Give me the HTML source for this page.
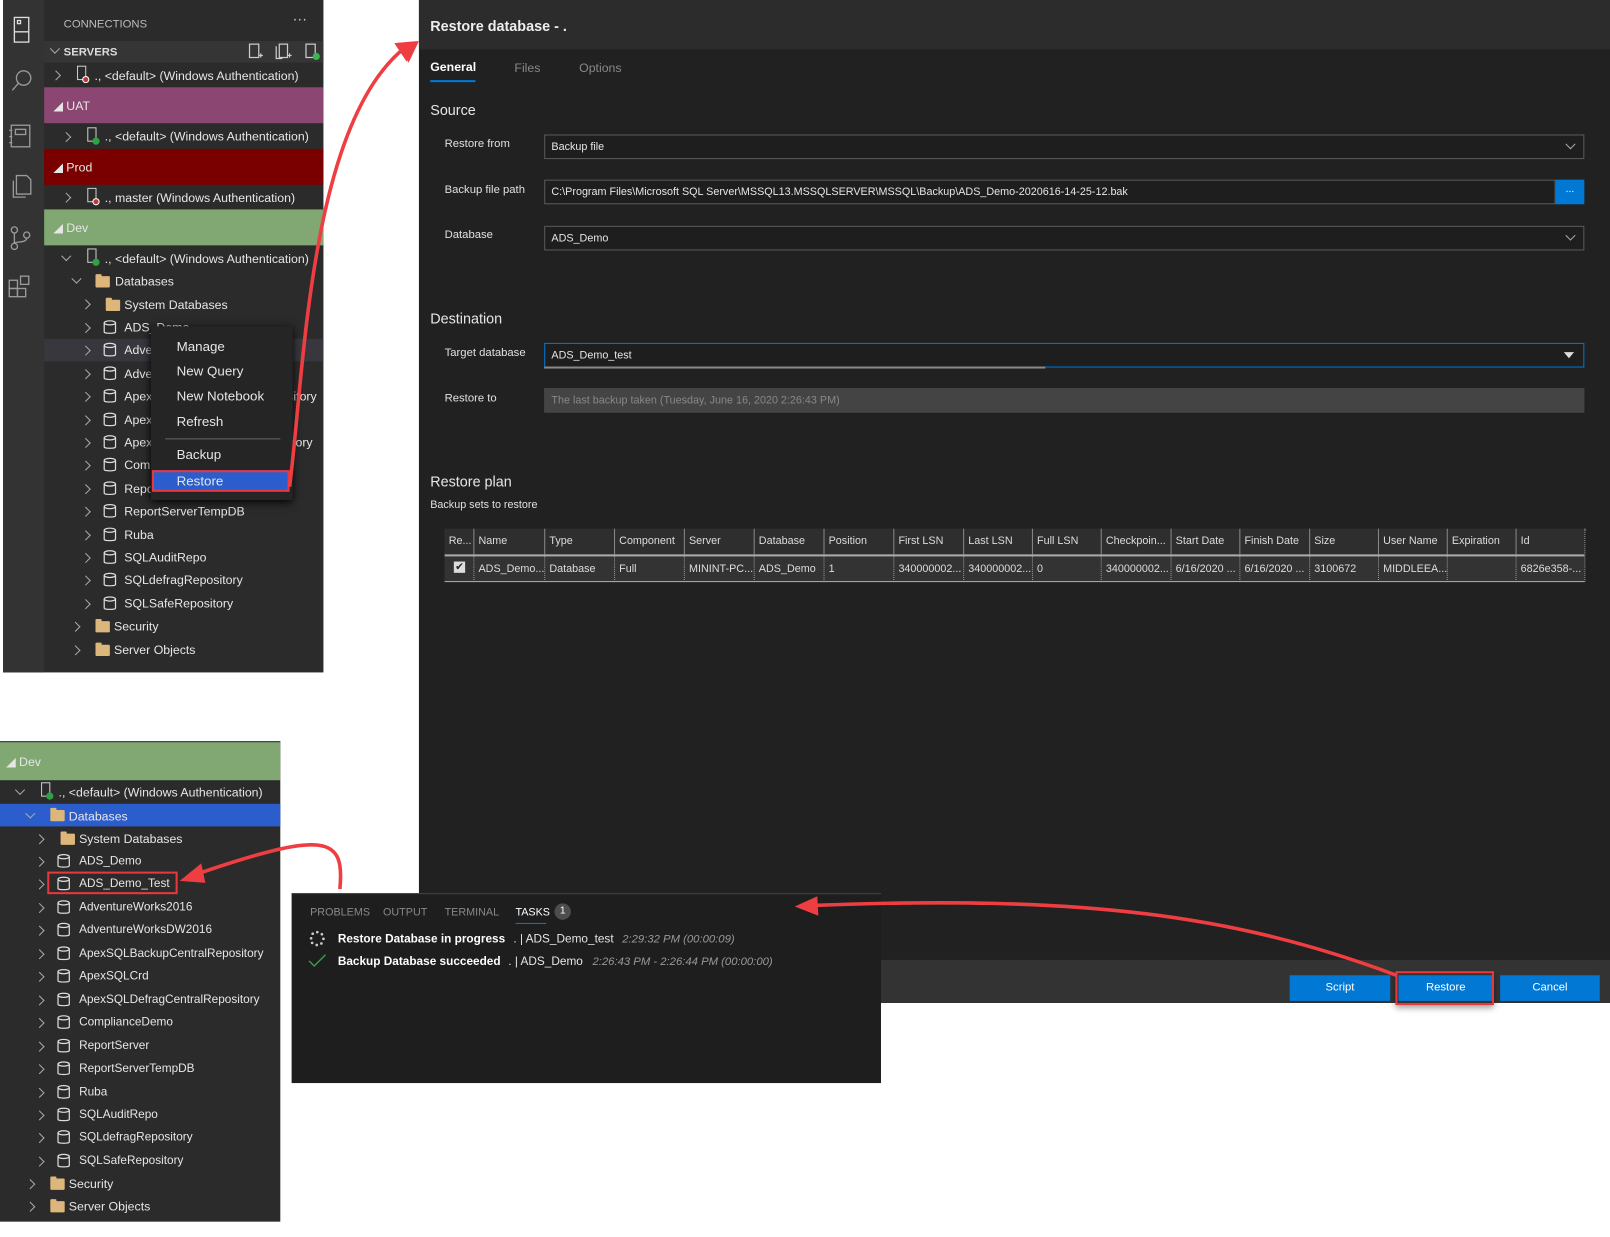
<!DOCTYPE html>
<html><head><meta charset="utf-8"><style>
*{margin:0;padding:0;box-sizing:border-box}
html,body{width:1610px;height:1237px;overflow:hidden;background:#fff}
#w{position:absolute;left:0;top:0;width:1568px;height:1205px;transform:scale(1.02679,1.0266);transform-origin:0 0;font-family:"Liberation Sans",sans-serif;color:#e0e0e0}
.a{position:absolute}
.t{position:absolute;font-size:12px;white-space:nowrap;color:#e6e6e6;line-height:16px}
.chev{position:absolute;width:7px;height:7px;border-right:1px solid #aaa;border-bottom:1px solid #aaa}
.cr{transform:rotate(-45deg)}
.cd{transform:rotate(45deg)}
.fold{position:absolute;width:14px;height:11px;background:#dcb67a;border-radius:1px}
.fold:before{content:"";position:absolute;left:0;top:-2px;width:6px;height:3px;background:#dcb67a;border-radius:1px 1px 0 0}
.lbl{position:absolute;font-size:11px;color:#e0e0e0;white-space:nowrap}
.inp{position:absolute;border:1px solid #5a5a5a;background:#1e1e1e;font-size:10.5px;color:#e6e6e6;padding-left:6px;line-height:22px;white-space:nowrap;overflow:hidden}
.th,.td{position:absolute;font-size:10.5px;white-space:nowrap;overflow:hidden;padding-left:4px;line-height:25px;color:#ddd}
.th{border-left:1px solid #888;height:25px;top:515px;background:#2e2e2e}
.td{border-left:1px dotted #999;height:25px;top:542px;background:#333}
.btn{position:absolute;top:950px;height:25px;background:#0078d4;color:#fff;font-size:11px;text-align:center;line-height:25px}
</style></head><body><div id="w">

<!-- Top-left panel -->
<div class="a" style="left:3px;top:0;width:312px;height:655px;background:#2b2b2b"></div>
<div class="a" style="left:3px;top:0;width:40px;height:655px;background:#333"></div>
<div class="a" style="left:43px;top:40px;width:272px;height:21px;background:#353535"></div>
<svg class="a" style="left:3px;top:0" width="40" height="300" viewBox="0 0 40 300" fill="none" stroke="#9a9a9a" stroke-width="1.3">
<rect x="11" y="17" width="14" height="24" stroke="#ddd"/><line x1="11" y1="31" x2="25" y2="31" stroke="#ddd"/><rect x="14" y="20" width="3" height="3" stroke="#ddd"/>
<circle cx="20" cy="76" r="7"/><line x1="15" y1="81" x2="9" y2="88"/>
<rect x="8" y="122" width="18" height="21"/><rect x="12" y="126" width="10" height="5"/><line x1="6" y1="127" x2="9" y2="127"/><line x1="6" y1="133" x2="9" y2="133"/><line x1="6" y1="139" x2="9" y2="139"/>
<path d="M13 171h10l4 4v14H13z M10 176v16h12"/>
<circle cx="11" cy="224" r="3"/><circle cx="11" cy="240" r="3"/><circle cx="23" cy="229" r="3"/><path d="M11 227v10 M23 232c0 5-12 3-12 5"/>
<rect x="6" y="281" width="8" height="8"/><rect x="14" y="281" width="8" height="8"/><rect x="6" y="273" width="8" height="8"/><rect x="17" y="269" width="8" height="8"/>
</svg>
<div class="t" style="left:62px;top:16px;font-size:11px;color:#bbb">CONNECTIONS</div>
<div class="t" style="left:285px;top:10px;font-size:14px;color:#ccc">···</div>
<div class="chev cd" style="left:50px;top:44px"></div>
<div class="t" style="left:62px;top:43px;font-size:11px;font-weight:bold;color:#ddd">SERVERS</div>
<svg class="a" style="left:238px;top:40px" width="76" height="20" fill="none" stroke="#ccc" stroke-width="1.2"><rect x="5" y="3" width="9" height="13"/><path d="M14 14h4M16 12v4"/><path d="M34 3h8v13h-8z M31 5v12h6"/><path d="M42 14h4M44 12v4"/><rect x="60" y="3" width="9" height="13"/><circle cx="70" cy="15" r="3.5" fill="#3fb34f" stroke="none"/></svg>

<!-- rows -->
<div class="chev cr" style="left:51px;top:70px"></div>
<div class="a" style="left:75px;top:64px;width:9px;height:14px;border:1px solid #ccc"></div><div class="a" style="left:80px;top:74px;width:7px;height:7px;border-radius:50%;background:#c33;border:1px solid #fff"></div>
<div class="t" style="left:92px;top:66px">., &lt;default&gt; (Windows Authentication)</div>

<div class="a" style="left:43px;top:85px;width:272px;height:35px;background:#8b4672"></div>
<div class="t" style="left:52px;top:95px;font-size:12px">◢ UAT</div>
<div class="chev cr" style="left:61px;top:130px"></div>
<div class="a" style="left:85px;top:124px;width:9px;height:14px;border:1px solid #ccc"></div><div class="a" style="left:90px;top:134px;width:7px;height:7px;border-radius:50%;background:#2da344"></div>
<div class="t" style="left:102px;top:125px">., &lt;default&gt; (Windows Authentication)</div>

<div class="a" style="left:43px;top:145px;width:272px;height:35px;background:#7a0000"></div>
<div class="t" style="left:52px;top:155px;font-size:12px">◢ Prod</div>
<div class="chev cr" style="left:61px;top:189px"></div>
<div class="a" style="left:85px;top:183px;width:9px;height:14px;border:1px solid #ccc"></div><div class="a" style="left:90px;top:193px;width:7px;height:7px;border-radius:50%;background:#c33;border:1px solid #fff"></div>
<div class="t" style="left:102px;top:185px">., master (Windows Authentication)</div>

<div class="a" style="left:43px;top:204px;width:272px;height:35px;background:#81a873"></div>
<div class="t" style="left:52px;top:214px;font-size:12px">◢ Dev</div>
<div class="chev cd" style="left:61px;top:246px"></div>
<div class="a" style="left:85px;top:242px;width:9px;height:14px;border:1px solid #ccc"></div><div class="a" style="left:90px;top:252px;width:7px;height:7px;border-radius:50%;background:#2da344"></div>
<div class="t" style="left:102px;top:244px">., &lt;default&gt; (Windows Authentication)</div>
<div class="chev cd" style="left:71px;top:268px"></div><div class="fold" style="left:93px;top:269px"></div>
<div class="t" style="left:112px;top:266px">Databases</div>
<div class="chev cr" style="left:80px;top:293px"></div><div class="fold" style="left:103px;top:292px"></div>
<div class="t" style="left:121px;top:289px">System Databases</div>
<div class="a" style="left:43px;top:330px;width:272px;height:22px;background:#37373d"></div>
<div id="dbrows1"></div>
<div class="chev cr" style="left:70px;top:607px"></div><div class="fold" style="left:93px;top:605px"></div><div class="t" style="left:111px;top:602px">Security</div>
<div class="chev cr" style="left:70px;top:630px"></div><div class="fold" style="left:93px;top:628px"></div><div class="t" style="left:111px;top:625px">Server Objects</div>

<!-- context menu -->
<div class="a" style="left:147px;top:318px;width:138px;height:169px;background:#252526;box-shadow:0 2px 8px #000"></div>
<div class="t" style="left:172px;top:330px;font-size:13px">Manage</div>
<div class="t" style="left:172px;top:354px;font-size:13px">New Query</div>
<div class="t" style="left:172px;top:378px;font-size:13px">New Notebook</div>
<div class="t" style="left:172px;top:403px;font-size:13px">Refresh</div>
<div class="a" style="left:161px;top:427px;width:112px;height:1px;background:#666"></div>
<div class="t" style="left:172px;top:435px;font-size:13px">Backup</div>
<div class="a" style="left:148px;top:458px;width:134px;height:21px;background:#2c5dcd;border:2px solid #e8383d"></div>
<div class="t" style="left:172px;top:461px;font-size:13px">Restore</div>

<!-- Bottom-left tree -->
<div class="a" style="left:0;top:722px;width:273px;height:468px;background:#2b2b2b"></div>
<div class="a" style="left:0;top:722px;width:273px;height:38px;background:#81a873;border-top:1px solid #333"></div>
<div class="t" style="left:6px;top:734px;font-size:12px">◢ Dev</div>
<div class="chev cd" style="left:16px;top:766px"></div>
<div class="a" style="left:40px;top:762px;width:9px;height:14px;border:1px solid #ccc"></div><div class="a" style="left:45px;top:772px;width:7px;height:7px;border-radius:50%;background:#2da344"></div>
<div class="t" style="left:57px;top:764px">., &lt;default&gt; (Windows Authentication)</div>
<div class="a" style="left:0;top:783px;width:273px;height:22px;background:#2c5dcd"></div>
<div class="chev cd" style="left:26px;top:789px"></div><div class="fold" style="left:49px;top:789px"></div>
<div class="t" style="left:67px;top:787px">Databases</div>
<div class="chev cr" style="left:35px;top:814px"></div><div class="fold" style="left:59px;top:812px"></div>
<div class="t" style="left:77px;top:809px">System Databases</div>
<div id="dbrows2"></div>
<div class="a" style="left:46px;top:849px;width:127px;height:22px;border:2px solid #e8383d"></div>
<div class="chev cr" style="left:26px;top:1150px"></div><div class="fold" style="left:49px;top:1148px"></div><div class="t" style="left:67px;top:1145px">Security</div>
<div class="chev cr" style="left:26px;top:1172px"></div><div class="fold" style="left:49px;top:1170px"></div><div class="t" style="left:67px;top:1167px">Server Objects</div>

<!-- Dialog -->
<div class="a" style="left:408px;top:0;width:1160px;height:977px;background:#212121"></div>
<div class="a" style="left:408px;top:0;width:1160px;height:48px;background:#2c2c2c"></div>
<div class="t" style="left:419px;top:17px;font-size:14px;font-weight:bold;color:#eee">Restore database - .</div>
<div class="t" style="left:419px;top:57px;font-size:12px;font-weight:bold;color:#fff">General</div>
<div class="a" style="left:419px;top:78px;width:44px;height:2px;background:#0078d4"></div>
<div class="t" style="left:501px;top:58px;font-size:12px;color:#888">Files</div>
<div class="t" style="left:564px;top:58px;font-size:12px;color:#888">Options</div>
<div class="t" style="left:419px;top:99px;font-size:14px">Source</div>
<div class="lbl" style="left:433px;top:134px">Restore from</div>
<div class="inp" style="left:530px;top:131px;width:1013px;height:24px">Backup file</div>
<div class="chev cd" style="left:1526px;top:137px"></div>
<div class="lbl" style="left:433px;top:179px">Backup file path</div>
<div class="inp" style="left:530px;top:175px;width:985px;height:24px">C:\Program Files\Microsoft SQL Server\MSSQL13.MSSQLSERVER\MSSQL\Backup\ADS_Demo-2020616-14-25-12.bak</div>
<div class="a" style="left:1515px;top:175px;width:28px;height:24px;background:#0078d4;color:#fff;font-size:10px;text-align:center;line-height:20px">...</div>
<div class="lbl" style="left:433px;top:223px">Database</div>
<div class="inp" style="left:530px;top:220px;width:1013px;height:24px">ADS_Demo</div>
<div class="chev cd" style="left:1526px;top:226px"></div>
<div class="t" style="left:419px;top:302px;font-size:14px">Destination</div>
<div class="lbl" style="left:433px;top:338px">Target database</div>
<div class="inp" style="left:530px;top:334px;width:1013px;height:24px;border-color:#0078d4">ADS_Demo_test</div>
<div class="a" style="left:530px;top:357px;width:488px;height:2px;background:#888"></div>
<div class="a" style="left:1523px;top:343px;border-left:5px solid transparent;border-right:5px solid transparent;border-top:6px solid #ddd"></div>
<div class="lbl" style="left:433px;top:382px">Restore to</div>
<div class="inp" style="left:530px;top:378px;width:1013px;height:24px;background:#444;border-color:#444;color:#888">The last backup taken (Tuesday, June 16, 2020 2:26:43 PM)</div>
<div class="t" style="left:419px;top:461px;font-size:14px">Restore plan</div>
<div class="lbl" style="left:419px;top:486px;font-size:10.5px">Backup sets to restore</div>
<div class="a" style="left:433px;top:515px;width:1110px;height:52px;background:#333"></div>
<div id="tbl"></div>
<div class="a" style="left:433px;top:540px;width:1110px;height:2px;background:#aaa"></div>
<div class="a" style="left:433px;top:566px;width:1110px;height:1px;background:#aaa"></div>
<div class="a" style="left:442px;top:547px;width:11px;height:11px;background:#ddd;color:#222;font-size:10px;line-height:11px;text-align:center">✔</div>

<div class="a" style="left:408px;top:935px;width:1160px;height:42px;background:#333"></div>
<div class="btn" style="left:1256px;width:98px">Script</div>
<div class="btn" style="left:1362px;width:92px">Restore</div>
<div class="a" style="left:1359px;top:946px;width:96px;height:33px;border:2px solid #e8383d;box-shadow:0 3px 6px rgba(0,0,0,.4)"></div>
<div class="btn" style="left:1461px;width:97px">Cancel</div>

<!-- Tasks panel -->
<div class="a" style="left:284px;top:870px;width:574px;height:185px;background:#1e1e1e;border-top:1px solid #444"></div>
<div class="t" style="left:302px;top:881px;font-size:10.5px;color:#888">PROBLEMS</div>
<div class="t" style="left:373px;top:881px;font-size:10.5px;color:#888">OUTPUT</div>
<div class="t" style="left:433px;top:881px;font-size:10.5px;color:#888">TERMINAL</div>
<div class="t" style="left:502px;top:881px;font-size:10.5px;color:#fff">TASKS</div>
<div class="a" style="left:502px;top:899px;width:30px;height:1px;background:#0078d4"></div>
<div class="a" style="left:540px;top:880px;width:16px;height:16px;border-radius:50%;background:#4d4d4d;color:#fff;font-size:10px;text-align:center;line-height:16px">1</div>
<svg class="a" style="left:301px;top:906px" width="16" height="16"><g fill="#ccc"><circle cx="8" cy="2" r="1.3"/><circle cx="12.5" cy="4" r="1.3"/><circle cx="14" cy="8.5" r="1.3"/><circle cx="12" cy="13" r="1.3"/><circle cx="7.5" cy="14.5" r="1.3"/><circle cx="3" cy="12.5" r="1.3"/><circle cx="2" cy="8" r="1.3"/><circle cx="3.5" cy="3.5" r="1.3"/></g></svg>
<div class="t" style="left:329px;top:907px;font-size:11.5px;font-weight:bold;color:#fff">Restore Database in progress</div>
<div class="t" style="left:500px;top:907px;font-size:11.5px">. | ADS_Demo_test</div>
<div class="t" style="left:606px;top:907px;font-size:11px;font-style:italic;color:#999">2:29:32 PM (00:00:09)</div>
<svg class="a" style="left:300px;top:929px" width="18" height="14"><path d="M1 7l5 5L17 1" fill="none" stroke="#3a9c4a" stroke-width="1.4"/></svg>
<div class="t" style="left:329px;top:929px;font-size:11.5px;font-weight:bold;color:#fff">Backup Database succeeded</div>
<div class="t" style="left:495px;top:929px;font-size:11.5px">. | ADS_Demo</div>
<div class="t" style="left:577px;top:929px;font-size:11px;font-style:italic;color:#999">2:26:43 PM - 2:26:44 PM (00:00:00)</div>

<!-- arrows -->
<svg class="a" style="left:0;top:0" width="1568" height="1205" fill="none" stroke="#ef3e42" stroke-width="3.5">
<path d="M282 474 C296 370 300 120 395 46"/><path d="M384 42 L406 40 L396 60" fill="#ef3e42" stroke="none"/>
<polygon points="408,40 385,42 398,61" fill="#ef3e42" stroke="none"/>
<path d="M331 866 C336 815 318 808 190 852"/><polygon points="175,858 196,841 200,860" fill="#ef3e42" stroke="none"/>
<path d="M1360 950 C1200 890 1050 872 792 882"/><polygon points="774,883 796,873 797,892" fill="#ef3e42" stroke="none"/>
</svg>

<script>
function db(x,y,clip){var c=document.createElement('div');c.innerHTML='<div class="chev cr" style="left:'+x+'px;top:'+(y+4)+'px"></div><svg class="a" style="left:'+(x+20)+'px;top:'+(y-1)+'px" width="14" height="16"><path d="M1.5 3.5v9c0 1.5 11 1.5 11 0v-9" fill="none" stroke="#ddd" stroke-width="1.2"/><ellipse cx="7" cy="3.5" rx="5.5" ry="2" fill="none" stroke="#ddd" stroke-width="1.2"/></svg>';return c.innerHTML;}
var n1=["ADS_Demo","AdventureWorks2016","AdventureWorksDW2016","ApexSQLBackupCentralRepository","ApexSQLCrd","ApexSQLDefragCentralRepository","ComplianceDemo","ReportServer","ReportServerTempDB","Ruba","SQLAuditRepo","SQLdefragRepository","SQLSafeRepository"];
var h='';n1.forEach(function(s,i){var y=312+i*22.4;h+=db(80,y)+'<div class="t" style="left:121px;top:'+(y-1)+'px;width:'+(315-121)+'px;overflow:hidden">'+s+'</div>';});
document.getElementById('dbrows1').innerHTML=h;
var n2=["ADS_Demo","ADS_Demo_Test","AdventureWorks2016","AdventureWorksDW2016","ApexSQLBackupCentralRepository","ApexSQLCrd","ApexSQLDefragCentralRepository","ComplianceDemo","ReportServer","ReportServerTempDB","Ruba","SQLAuditRepo","SQLdefragRepository","SQLSafeRepository"];
h='';n2.forEach(function(s,i){var y=832+i*22.45;h+=db(35,y)+'<div class="t" style="left:77px;top:'+(y-1)+'px;font-size:11.5px">'+s+'</div>';});
document.getElementById('dbrows2').innerHTML=h;
var b=[433,461,530,598,666,734,802,870,938,1005,1072,1140,1207,1275,1342,1409,1476,1543];
var hd=["Re...","Name","Type","Component","Server","Database","Position","First LSN","Last LSN","Full LSN","Checkpoin...","Start Date","Finish Date","Size","User Name","Expiration","Id"];
var rw=["","ADS_Demo...","Database","Full","MININT-PC...","ADS_Demo","1","340000002...","340000002...","0","340000002...","6/16/2020 ...","6/16/2020 ...","3100672","MIDDLEEA...","","6826e358-..."];
h='';for(var i=0;i<17;i++){var w=b[i+1]-b[i];h+='<div class="th" style="left:'+b[i]+'px;width:'+w+'px'+(i==0?';border-left:none':'')+'">'+hd[i]+'</div><div class="td" style="left:'+b[i]+'px;width:'+w+'px'+(i==0?';border-left:none':'')+'">'+rw[i]+'</div>';}
h+='<div class="a" style="left:1543px;top:515px;width:1px;height:52px;border-left:1px dotted #999"></div>';
document.getElementById('tbl').innerHTML=h;
</script>
</div></body></html>
